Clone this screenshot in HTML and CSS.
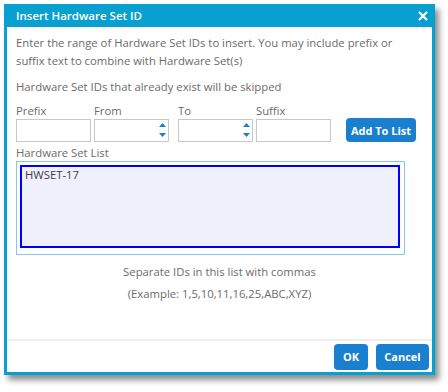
FILE: index.html
```html
<!DOCTYPE html>
<html lang="en">
<head>
    <meta charset="UTF-8">
    <title>Insert Hardware Set ID</title>
    <link rel="stylesheet" href="styles.css">
</head>
<body>

    <div class="dialog">
        <div class="dialog-header">
            <span class="dialog-title">Insert Hardware Set ID</span>
            <svg class="close" width="10" height="10" viewBox="0 0 10 10">
                <path d="M1 1 L9 9 M9 1 L1 9" stroke="#fff" stroke-width="2.2"/>
            </svg>
        </div>

        <div class="dialog-body">
            <p class="intro">Enter the range of Hardware Set IDs to insert. You may include prefix or suffix text to combine with Hardware Set(s)</p>
            <p class="note">Hardware Set IDs that already exist will be skipped</p>

            <div class="range-row">
                <div class="field">
                    <label>Prefix</label>
                    <input type="text" class="box">
                </div>
                <div class="field from-field">
                    <label>From</label>
                    <div class="spin-wrap">
                        <input type="text" class="box">
                        <span class="spin">
                            <svg width="7" height="16" viewBox="0 0 7 16">
                                <path d="M0 5 L3.5 1 L7 5 Z" fill="#1b7fd0"/>
                                <path d="M0 11 L3.5 15 L7 11 Z" fill="#1b7fd0"/>
                            </svg>
                        </span>
                    </div>
                </div>
                <div class="field to-field">
                    <label>To</label>
                    <div class="spin-wrap">
                        <input type="text" class="box">
                        <span class="spin">
                            <svg width="7" height="16" viewBox="0 0 7 16">
                                <path d="M0 5 L3.5 1 L7 5 Z" fill="#1b7fd0"/>
                                <path d="M0 11 L3.5 15 L7 11 Z" fill="#1b7fd0"/>
                            </svg>
                        </span>
                    </div>
                </div>
                <div class="field suffix-field">
                    <label>Suffix</label>
                    <input type="text" class="box">
                </div>
                <button class="btn add-btn">Add To List</button>
            </div>

            <label class="list-label">Hardware Set List</label>
            <div class="list-frame">
                <div class="list-area">HWSET-17</div>
            </div>

            <p class="hint first-hint">Separate IDs in this list with commas</p>
            <p class="hint">(Example: 1,5,10,11,16,25,ABC,XYZ)</p>
        </div>

        <div class="dialog-footer">
            <button class="btn ok-btn">OK</button>
            <button class="btn cancel-btn">Cancel</button>
        </div>
    </div>

</body>
</html>
```

FILE: styles.css
```css
html, body {
    margin: 0;
    height: 100%;
}

body {
    background: #fff;
    font-family: "Open Sans", Arial, sans-serif;
    font-size: 11.3px;
    color: #6b6b6b;
}

.dialog {
    margin: 4px 0 0 4px;
    width: 425px;
    height: 368px;
    border: 3px solid #08a0d0;
    border-top: none;
    display: flex;
    flex-direction: column;
    background: #fff;
    box-shadow: 4px 5px 6px rgba(0, 0, 0, 0.45);
}

/* Title bar */
.dialog-header {
    height: 23px;
    background: #08a0d0;
    display: flex;
    align-items: center;
    justify-content: space-between;
    margin: 0 -3px;
    padding: 0 7px 0 12px;
}

.dialog-title {
    color: #fff;
    font-weight: 600;
    font-size: 11.5px;
}

.dialog-body {
    flex: 1;
    padding: 7px 9px 0 9px;
}

.intro {
    margin: 0;
    max-width: 390px;
    line-height: 18px;
}

.note {
    margin: 8px 0 0 0;
    line-height: 18px;
}

/* Prefix / From / To / Suffix row */
.range-row {
    display: flex;
    align-items: flex-end;
    margin-top: 7px;
}

.field {
    display: flex;
    flex-direction: column;
}

.from-field {
    margin-left: 3px;
}

.to-field {
    margin-left: 9px;
}

.suffix-field {
    margin-left: 3px;
}

.field label {
    line-height: 16px;
}

.box {
    width: 75px;
    height: 23px;
    box-sizing: border-box;
    border: 1px solid #c8c8c8;
    padding: 0 4px;
    margin: 0;
    font-family: inherit;
    font-size: 12px;
}

.spin-wrap {
    position: relative;
}

.spin {
    position: absolute;
    right: 3px;
    top: 3px;
    display: flex;
}

.btn {
    border: none;
    background: #1b7fd0;
    color: #fff;
    font-family: inherit;
    font-weight: bold;
    font-size: 11px;
    border-radius: 4px;
    cursor: pointer;
    padding: 0;
}

.add-btn {
    width: 70px;
    height: 24px;
    margin-left: 15px;
}

/* Hardware set list */
.list-label {
    display: block;
    line-height: 16px;
    margin-top: 3px;
}

.list-frame {
    width: 380px;
    height: 83px;
    border: 1px solid #8cc4ea;
    padding: 3px 4px 6px 3px;
}

.list-area {
    height: 79px;
    border: 2px solid #0000ff;
    background: #f0f0fc;
    color: #3d3d3d;
    padding: 0 3px;
    line-height: 16px;
}

.hint {
    margin: 0;
    text-align: center;
    line-height: 18px;
}

.first-hint {
    margin-top: 8px;
}

.hint + .hint {
    margin-top: 4px;
}

/* Footer */
.dialog-footer {
    border-top: 2px solid #eeeeee;
    height: 33px;
    box-sizing: border-box;
    display: flex;
    justify-content: flex-end;
    align-items: center;
    gap: 8px;
    padding: 0 3px 0 0;
}

.ok-btn {
    width: 34px;
    height: 26px;
}

.cancel-btn {
    width: 53px;
    height: 26px;
}
```
